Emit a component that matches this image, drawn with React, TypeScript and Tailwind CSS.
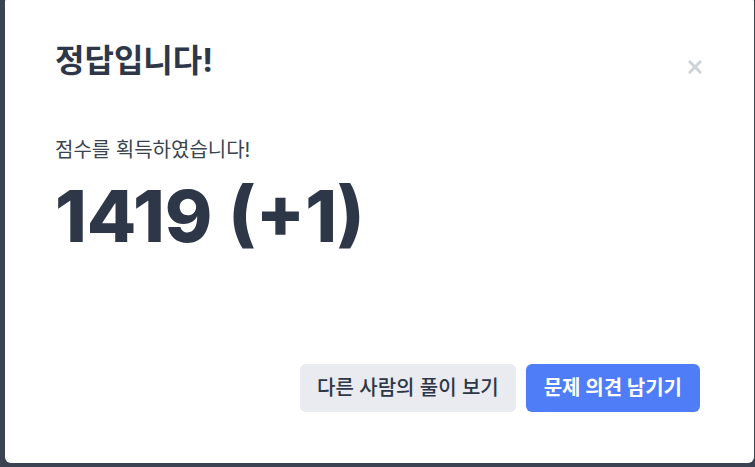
import React from 'react';

const App: React.FC = () => {
  return (
    <div
      className="h-[467px] w-[755px] overflow-hidden bg-[#3b4252]"
      style={{ fontFamily: 'Inter, "Noto Sans CJK KR", sans-serif' }}
    >
      <div className="relative ml-[5px] mt-[-4px] flex h-[467px] w-[749px] flex-col rounded-md bg-white pl-[50px] pr-[54px] pt-[45px]">
        <button className="absolute right-[52px] top-[64px] text-[#cfd3d8]">
          <svg width="14" height="14" viewBox="0 0 14 14" fill="none">
            <path d="M2 2L12 12M12 2L2 12" stroke="currentColor" strokeWidth="3" strokeLinecap="square" />
          </svg>
        </button>

        <h1 className="text-[32px] font-bold leading-[40px] text-[#2d3748]">정답입니다!</h1>

        <p className="mt-[55px] text-xl text-[#3a4350]">점수를 획득하였습니다!</p>
        <div className="mt-[16px] text-[72px] font-extrabold leading-none text-[#2d3748]">
          1419 (+1)
        </div>

        <div className="mt-auto mb-[51px] flex justify-end gap-[10px]">
          <button className="h-12 rounded-md bg-[#e9ebf0] px-[17px] text-xl font-medium text-[#2d3748]">
            다른 사람의 풀이 보기
          </button>
          <button className="h-12 rounded-md bg-[#4f7cf7] px-[18px] text-xl font-bold text-white">
            문제 의견 남기기
          </button>
        </div>
      </div>
    </div>
  );
};

export default App;
